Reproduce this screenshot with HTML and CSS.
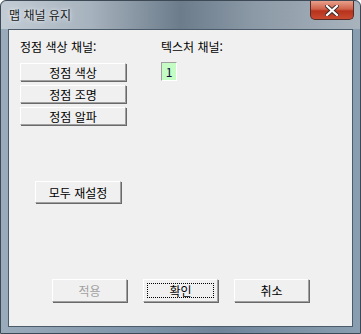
FILE: index.html
```html
<!DOCTYPE html>
<html lang="ko">
<head>
    <meta charset="UTF-8">
    <title>맵 채널 유지</title>
    <link rel="stylesheet" href="styles.css">
</head>
<body>

<div class="window">
    <div class="titlebar">
        <span class="title">맵 채널 유지</span>
        <span class="close">
            <svg width="14" height="11" viewBox="0 0 14 11">
                <path d="M2 1 L12 10 M12 1 L2 10" stroke="#3a2a2a" stroke-width="4" stroke-linecap="square"/>
                <path d="M2 1 L12 10 M12 1 L2 10" stroke="#ffffff" stroke-width="2.2" stroke-linecap="square"/>
            </svg>
        </span>
    </div>
    <div class="client">
        <div class="columns">
            <div class="col-left">
                <div class="label">정점 색상 채널:</div>
                <div class="btn-list">
                    <button class="btn wide">정점 색상</button>
                    <button class="btn wide">정점 조명</button>
                    <button class="btn wide">정점 알파</button>
                </div>
                <button class="btn reset">모두 재설정</button>
            </div>
            <div class="col-right">
                <div class="label">텍스처 채널:</div>
                <div class="channel">1</div>
            </div>
        </div>
        <div class="footer">
            <button class="btn action disabled">적용</button>
            <button class="btn action focused"><span class="focus">확인</span></button>
            <button class="btn action">취소</button>
        </div>
    </div>
</div>

</body>
</html>
```

FILE: styles.css
```css
body {
    margin: 0;
    font-family: "Noto Sans CJK KR", "DejaVu Sans", sans-serif;
    font-size: 12px;
    background: #ffffff;
}
.window {
    width: 361px;
    height: 334px;
    box-sizing: border-box;
    display: flex;
    flex-direction: column;
    background: linear-gradient(90deg, #9aabbb 0%, #7d93a8 40%, #6f8499 60%, #8a9eb1 100%);
    border: 1px solid #3d4a56;
    border-radius: 6px 6px 0 0;
}
.titlebar {
    height: 28px;
    display: flex;
    justify-content: space-between;
    align-items: flex-start;
    background: linear-gradient(90deg, #c3ccd5 0%, #a6b2bd 25%, #6c7c8b 50%, #8b99a6 70%, #a8b3bd 100%);
    border-radius: 6px 6px 0 0;
}
.title {
    margin: 6px 0 0 8px;
    color: #1a1a1a;
    line-height: 16px;
    text-shadow: 0 0 6px #e8eef4, 0 0 3px #e8eef4;
}
.close {
    width: 44px;
    height: 19px;
    margin-right: 6px;
    display: flex;
    justify-content: center;
    align-items: center;
    background: linear-gradient(180deg, #e8a08c 0%, #d0624a 45%, #b8321c 55%, #c84a30 100%);
    border: 1px solid #5a2a24;
    border-top: none;
    border-radius: 0 0 5px 5px;
    box-sizing: border-box;
}
.client {
    flex: 1;
    margin: 0 7px 6px 7px;
    background: #f0f0f0;
    border: 1px solid #4c5b69;
    display: flex;
    flex-direction: column;
}
.columns {
    display: flex;
    gap: 35px;
    padding: 9px 0 0 11px;
}
.col-left {
    width: 106px;
    display: flex;
    flex-direction: column;
}
.label {
    height: 16px;
    line-height: 16px;
    margin-bottom: 8px;
    color: #000000;
    white-space: nowrap;
}
.btn-list {
    display: flex;
    flex-direction: column;
    gap: 4px;
}
.btn {
    font-family: "Noto Sans CJK KR", "DejaVu Sans", sans-serif;
    font-size: 12px;
    color: #000000;
    background: #f0f0f0;
    border: 1px solid;
    border-color: #ffffff #a0a0a0 #a0a0a0 #ffffff;
    box-shadow: 1px 1px 0 #696969;
    padding: 0;
    display: flex;
    justify-content: center;
    align-items: center;
    box-sizing: border-box;
}
.wide {
    width: 106px;
    height: 18px;
}
.reset {
    width: 86px;
    height: 22px;
    margin: 56px 0 0 15px;
}
.channel {
    width: 16px;
    height: 19px;
    box-sizing: border-box;
    border: 1px solid;
    border-color: #a0a0a0 #ffffff #ffffff #a0a0a0;
    background: #c4fcc4;
    color: #0a0a40;
    text-align: center;
    line-height: 17px;
    margin-top: -1px;
}
.footer {
    margin-top: auto;
    padding-bottom: 24px;
    display: flex;
    justify-content: center;
    gap: 16px;
}
.action {
    width: 75px;
    height: 23px;
}
.disabled {
    color: #a0a0a0;
}
.focused .focus {
    width: 67px;
    height: 15px;
    line-height: 15px;
    border: 1px dotted #000000;
    box-sizing: border-box;
    display: flex;
    justify-content: center;
    align-items: center;
}
```
